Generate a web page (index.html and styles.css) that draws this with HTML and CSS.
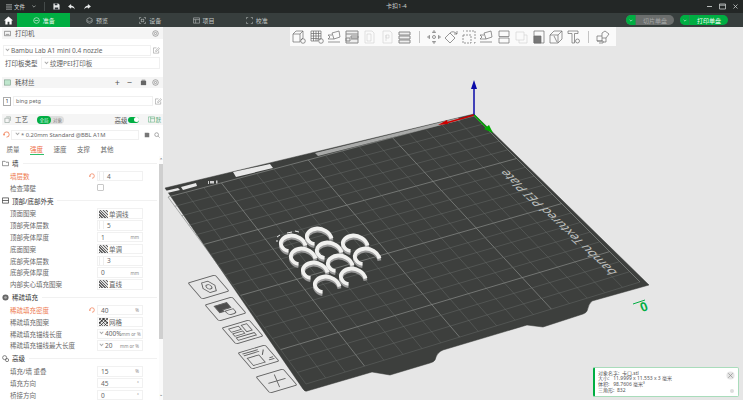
FILE: index.html
```html
<!DOCTYPE html>
<html lang="zh">
<head>
<meta charset="utf-8">
<title>卡扣1-4</title>
<link rel="stylesheet" href="styles.css">
</head>
<body>
<svg class="defs" width="0" height="0">
  <symbol id="reset" viewBox="0 0 8 8"><path d="M1.2 4.8A3 3 0 1 1 4 7" fill="none" stroke="#f0764a" stroke-width=".9"/><path d="M0 3.6h2.4L1.2 5.4z" fill="#f0764a"/></symbol>
  <symbol id="edit" viewBox="0 0 8 8"><path d="M6.5 4v3h-6V1h3.500M3 5l.3-1.300L6.500.8l1 1L4.300 5z" fill="none" stroke="#8a8a8a" stroke-width=".6"/></symbol>
  <symbol id="gear" viewBox="0 0 8 8"><circle cx="4" cy="4" r="3.200" fill="none" stroke="#777" stroke-width=".7"/><circle cx="4" cy="4" r="1.300" fill="none" stroke="#777" stroke-width=".7"/></symbol>
</svg>

<header class="titlebar">
  <div class="title-left">
    <svg class="ti menu" viewBox="0 0 7 6"><path d="M0 .5h7M0 3h7M0 5.500h7" stroke="#d8dcdb" stroke-width=".8"/></svg>
    <span class="file">文件</span>
    <svg class="ti chev" viewBox="0 0 6 4"><path d="M.5.5 3 3 5.500.5" fill="none" stroke="#cfd3d2" stroke-width=".9"/></svg>
    <i class="sep"></i>
    <svg class="ti save" viewBox="0 0 8 8"><path d="M.5.500h5.500l1.500 1.500v5.500h-7z" fill="#e8eaea"/><path d="M2 .500h3v2H2zM2 5h4v2.500H2z" fill="#30363a"/></svg>
    <svg class="ti undo" viewBox="0 0 8 7"><path d="M3.500 0 0 2.800l3.500 2.700V4c2 0 3.500.6 4.500 2.500C7.700 3.800 6 2 3.500 1.800z" fill="#e8eaea"/></svg>
    <svg class="ti redo" viewBox="0 0 8 7"><path d="M4.500 0 8 2.800 4.500 5.500V4C2.500 4 1 4.600 0 6.500.3 3.800 2 2 4.500 1.800z" fill="#e8eaea"/></svg>
  </div>
  <div class="title-name">卡扣1-4</div>
  <div class="win">
    <svg class="wi" viewBox="0 0 7 7"><path d="M1 3.500h5" stroke="#c8cccb" stroke-width=".9"/></svg>
    <svg class="wi" viewBox="0 0 7 7"><path d="M.5 1h6v5h-6zM.5 2.200h6" fill="none" stroke="#c8cccb" stroke-width=".8"/></svg>
    <svg class="wi" viewBox="0 0 7 7"><path d="m1.500 1.500 4 4m0-4-4 4" stroke="#c8cccb" stroke-width=".8"/></svg>
  </div>
</header>

<nav class="tabbar">
  <div class="home"><svg viewBox="0 0 10 10"><path d="M5 .5 10 5H8.500v4.500H6V6.500H4v3H1.500V5H0z" fill="#fff"/></svg></div>
  <div class="tab active"><svg viewBox="0 0 8 8"><circle cx="4" cy="4" r="3.200" fill="none" stroke="#e8f7ee" stroke-width=".7"/><path d="M2 4h4" stroke="#e8f7ee" stroke-width=".7"/></svg><span>准备</span></div>
  <div class="tab"><svg viewBox="0 0 8 8"><path d="M1 2.200 4 .8l3 1.400v3.600L4 7.200 1 5.800z" fill="none" stroke="#b5bab9" stroke-width=".7"/><path d="M1 4l3 1.400L7 4" fill="none" stroke="#b5bab9" stroke-width=".6"/></svg><span>预览</span></div>
  <div class="tab"><svg viewBox="0 0 8 8"><path d="M.5 2.500v-2h2M5.500.5h2v2M7.500 5.500v2h-2M2.500 7.500h-2v-2" fill="none" stroke="#b5bab9" stroke-width=".7"/><rect x="2.500" y="2.500" width="3" height="3" fill="none" stroke="#b5bab9" stroke-width=".7"/></svg><span>设备</span></div>
  <div class="tab"><svg viewBox="0 0 8 8"><path d="M.5 1h7v6h-7zM.5 3h7M3 3v4" fill="none" stroke="#b5bab9" stroke-width=".7"/></svg><span>项目</span></div>
  <div class="tab"><svg viewBox="0 0 8 8"><path d="M.5 2.500v-2h2M5.500.5h2v2M7.500 5.500v2h-2M2.500 7.500h-2v-2" fill="none" stroke="#b5bab9" stroke-width=".7"/></svg><span>校准</span></div>
  <div class="actions">
    <div class="action off"><b class="drop"><svg viewBox="0 0 6 4"><path d="M1 1 3 3l2-2" fill="none" stroke="#fff" stroke-width=".8"/></svg></b><span>切片单盘</span></div>
    <div class="action on"><b class="drop"><svg viewBox="0 0 6 4"><path d="M1 1 3 3l2-2" fill="none" stroke="#fff" stroke-width=".8"/></svg></b><span>打印单盘</span></div>
  </div>
</nav>

<main class="workspace">
  <aside class="side">
    <div class="sect first">
      <svg class="si" viewBox="0 0 8 8"><path d="M.5 1.500h7v5h-7zM2 5h4" fill="none" stroke="#777" stroke-width=".8"/></svg>
      <span class="sect-name">打印机</span>
      <svg class="si end"><use href="#gear"/></svg>
    </div>
    <div class="line printer">
      <div class="select wide"><i class="caret"></i>Bambu Lab A1 mini 0.4 nozzle</div>
      <svg class="si"><use href="#edit"/></svg>
    </div>
    <div class="line plate">
      <span class="plate-label">打印板类型</span>
      <div class="select plate-select"><i class="caret"></i>纹理PEI打印板</div>
    </div>
    <div class="sect filament">
      <svg class="si" viewBox="0 0 8 8"><rect x=".5" y="1" width="7" height="6" fill="#bfe6cd" stroke="#7b9c88" stroke-width=".7"/></svg>
      <span class="sect-name">耗材丝</span>
      <span class="sym plus">+</span>
      <span class="sym">−</span>
      <svg class="si box" viewBox="0 0 8 8"><path d="M1 2h6v5H1z" fill="#666"/><path d="M2 .8h4V2H2z" fill="#888"/></svg>
      <svg class="si"><use href="#gear"/></svg>
    </div>
    <div class="line spool">
      <span class="slot">1</span>
      <div class="select spool-name">bing petg</div>
      <svg class="si"><use href="#edit"/></svg>
    </div>
    <div class="sect process">
      <svg class="si" viewBox="0 0 8 8"><path d="M2.500 1h5v4.500M1 2.500h5v5H1z" fill="none" stroke="#8a9a92" stroke-width=".7"/></svg>
      <span class="sect-name">工艺</span>
      <div class="seg"><span class="seg-on">全局</span><span class="seg-off">对象</span></div>
      <span class="adv">高级</span>
      <i class="switch"></i>
      <svg class="si view" viewBox="0 0 8 8"><path d="M.5 1h7v6h-7zM3 1v6M3 3h4.500" fill="none" stroke="#54a877" stroke-width=".6"/></svg>
      <span class="mode">默</span>
    </div>
    <div class="line preset">
      <svg class="si"><use href="#reset"/></svg>
      <div class="select preset-name"><i class="caret"></i>* 0.20mm Standard @BBL A1M</div>
      <svg class="ps" viewBox="0 0 8 8"><path d="M1 1h5l1 1v5H1z" fill="#777"/></svg>
      <svg class="ps" viewBox="0 0 8 8"><circle cx="3.500" cy="3.500" r="2.500" fill="none" stroke="#777" stroke-width=".8"/><path d="m5.500 5.500 2 2" stroke="#777" stroke-width=".8"/></svg>
    </div>
    <div class="subtabs">
      <span>质量</span><span class="cur">强度</span><span>速度</span><span>支撑</span><span>其他</span>
    </div>

    <div class="params">
      <div class="list">
        <div class="group"><svg class="gi" viewBox="0 0 8 8"><path d="M.5 1.500h3l1 1h3v4h-7z" fill="none" stroke="#555" stroke-width=".7"/></svg><b>墙</b><i></i></div>
        <div class="row mod"><span class="lab">墙层数</span><svg class="rs"><use href="#reset"/></svg><div class="field"><span class="spin"></span>4</div></div>
        <div class="row"><span class="lab">检查薄壁</span><div class="check-wrap"><i class="check"></i></div></div>

        <div class="group"><svg class="gi" viewBox="0 0 8 8"><path d="M.5 1h7v6h-7zM.5 4h7" fill="none" stroke="#333" stroke-width=".8"/></svg><b>顶部/底部外壳</b><i></i></div>
        <div class="row"><span class="lab">顶面图案</span><div class="field pat"><i class="hatch"></i>单调线</div></div>
        <div class="row"><span class="lab">顶部壳体层数</span><div class="field"><span class="spin"></span>5</div></div>
        <div class="row"><span class="lab">顶部壳体厚度</span><div class="field"><span class="nospin"></span>1<em>mm</em></div></div>
        <div class="row"><span class="lab">底面图案</span><div class="field pat"><i class="hatch"></i>单调</div></div>
        <div class="row"><span class="lab">底部壳体层数</span><div class="field"><span class="spin"></span>3</div></div>
        <div class="row"><span class="lab">底部壳体厚度</span><div class="field"><span class="nospin"></span>0<em>mm</em></div></div>
        <div class="row"><span class="lab">内部实心填充图案</span><div class="field pat"><i class="hatch"></i>直线</div></div>

        <div class="group"><svg class="gi" viewBox="0 0 8 8"><circle cx="4" cy="4" r="3.500" fill="#666"/><circle cx="4" cy="4" r="1.500" fill="#aaa"/></svg><b>稀疏填充</b><i></i></div>
        <div class="row mod"><span class="lab">稀疏填充密度</span><svg class="rs"><use href="#reset"/></svg><div class="field"><span class="nospin"></span>40<em>%</em></div></div>
        <div class="row"><span class="lab">稀疏填充图案</span><div class="field pat"><i class="hatch mesh"></i>网格</div></div>
        <div class="row"><span class="lab">稀疏填充锚线长度</span><div class="field"><i class="caret"></i>400%<em class="tight">mm or %</em></div></div>
        <div class="row"><span class="lab">稀疏填充锚线最大长度</span><div class="field"><i class="caret"></i>20<em>mm or %</em></div></div>

        <div class="group"><svg class="gi" viewBox="0 0 8 8"><circle cx="3" cy="3" r="2.300" fill="none" stroke="#555" stroke-width=".8"/><circle cx="5.800" cy="5.800" r="1.800" fill="none" stroke="#555" stroke-width=".8"/></svg><b>高级</b><i></i></div>
        <div class="row"><span class="lab">填充/墙 重叠</span><div class="field"><span class="nospin"></span>15<em>%</em></div></div>
        <div class="row"><span class="lab">填充方向</span><div class="field"><span class="nospin"></span>45<em>°</em></div></div>
        <div class="row"><span class="lab">桥接方向</span><div class="field"><span class="nospin"></span>0<em>°</em></div></div>
      </div>
      <div class="scroll"><span class="arrow">⌃</span><div class="thumb"></div><span class="arrow low">⌄</span></div>
    </div>
  </aside>

  <section class="stage">
    <svg class="scene" viewBox="163 27 580 373" width="580" height="373">
      <defs>
        <g id="ring">
          <path d="M12.500 3.500C11-3.500 3-6.800-2-6.500-9-6-14-1-11.500 4-10 7-7.500 8.500-4.500 9" fill="none" stroke="#9a9a9a" stroke-width="3.800" transform="translate(0 2.200)"/>
          <path d="M12.500 3.500C11-3.500 3-6.800-2-6.500-9-6-14-1-11.500 4-10 7-7.500 8.500-4.500 9" fill="none" stroke="#f0f0ee" stroke-width="3.800"/>
        </g>
      </defs>
      <path class="plate-body" d="M165 188 474 114 649 285 592 301Q589 303 587 311 586 313 583 314L543 327 527 325 443 350Q437 352 435 360 434 362 430 363L390 375 372 372 307 391Q305 392 303 389Z"/>
      <g id="grid"></g>
      <path class="strip" d="M165 191 178 188 180 190 167 193Z"/>
      <path class="strip" d="M181 187 196 183 197 186 183 190Z"/>
      <path class="strip" d="M233 172 270 164 273 168 236 177Z"/>
      <path class="strip faint" d="M315 153 458 118 461 120 318 156Z"/>
      <path class="mark" d="M210 181h4v2.500h-4zM216 180.500h1.500v3h-1.500zM208 181h1v3h-1z"/>
      <text class="plate-text" transform="matrix(-.73 -.68 .97 -.26 618 273)" textLength="152" lengthAdjust="spacingAndGlyphs">bambu Textured PEI Plate</text>

      <g class="rings">
        <use href="#ring" x="293" y="242"/><use href="#ring" x="319" y="235"/><use href="#ring" x="355" y="242"/>
        <use href="#ring" x="329" y="249"/><use href="#ring" x="303" y="255"/><use href="#ring" x="367" y="255"/>
        <use href="#ring" x="340" y="262"/><use href="#ring" x="315" y="269"/><use href="#ring" x="353" y="275"/>
        <use href="#ring" x="327" y="283"/>
      </g>
      <path class="select-marks" d="M277 237l3-2M277 240v2M287 233l5-1M295 231l4 1"/>

      <path class="axis-b" d="M474 115V87"/><path fill="#0a0aa8" d="M474 80 477 89H471Z"/>
      <path class="axis-r" d="M474 115 446 123"/><path fill="#c00" d="M438 125 447 120 448 124Z"/>
      <path class="axis-g" d="M474 115 488 129"/><path fill="#0a0" d="M493 133 484 129 489 125Z"/>

      <path class="zero-line" d="M633 304 645 300"/>
      <text class="zero" transform="matrix(.95 -.28 .35 .95 642 312)">0</text>

      <g class="pad" transform="matrix(.9 -.267 .7 .8 188 283)">
        <rect width="30" height="20" rx="1.500"/>
        <path d="M9 10 12 4H19L22 10 19 16H12Z"/><circle cx="15.500" cy="10" r="2.500"/>
      </g>
      <g class="pad" transform="matrix(.9 -.267 .7 .8 205 305)">
        <rect width="30" height="20" rx="1.500"/>
        <path class="fillp" d="M7 4H21V10H12V12H7Z"/><path d="M13 12H22V15Q22 17 19 17H16Q13 17 13 14Z"/>
      </g>
      <g class="pad" transform="matrix(.9 -.267 .7 .8 222 328)">
        <rect width="30" height="20" rx="1.500"/>
        <path d="M5 3H16V7H5ZM5 9H16V12H5ZM19 3H25V11H19ZM5 14H25V17H5Z"/>
      </g>
      <g class="pad" transform="matrix(.9 -.267 .7 .8 238 353)">
        <rect width="30" height="20" rx="1.500"/>
        <path d="M3 2.500H20M3 4.500H20M4 8H17V17H4ZM20 9 25 4M24 14H28M22 16H28"/>
      </g>
      <g class="pad" transform="matrix(.9 -.267 .7 .8 256 377)">
        <rect width="30" height="20" rx="1.500"/>
        <path d="M6 10H25M18 3 13 17"/>
      </g>
    </svg>

    <div class="toolbar">
      <svg class="tool" viewBox="0 0 14 14"><path d="M1 4 4 1H11V8L9 10M1 4H8V12H1ZM8 4 11 1"/><circle cx="11" cy="11" r="2.300"/></svg>
      <svg class="tool" viewBox="0 0 14 14"><path d="M1 1H11V9H8V11H1ZM1 3.500H11M1 6H11M1 8.500H8M3.500 1V11M6 1V11M8.500 1V9"/><circle cx="11" cy="11" r="2.300"/></svg>
      <svg class="tool" viewBox="0 0 14 14"><path d="M5 3 12 1 13 7 7 9ZM5 5H1L3 7 1 9H7M1 12H13" /></svg>
      <svg class="tool solid" viewBox="0 0 14 14"><path d="M1 1H13V13H1ZM1 4H13M1 8H5V11H1ZM6 6H13V8H6ZM6 9H13" /></svg>
      <svg class="tool dim" viewBox="0 0 14 14"><path d="M3 1H10L12 3V13H3ZM5 4H9V11H5Z"/></svg>
      <svg class="tool dim" viewBox="0 0 14 14"><path d="M3 1H10L12 3V13H3ZM6 5H9V8H6ZM6 5V11"/></svg>
      <svg class="tool solid" viewBox="0 0 14 14"><path d="M2 2H13V5H2ZM2 6H13V9H2ZM2 10H13V13H2Z"/></svg>
      <i class="tsep"></i>
      <svg class="tool" viewBox="0 0 14 14"><path d="M7 .5 8.500 2.500H5.500ZM7 13.500 8.500 11.500H5.500ZM.5 7 2.500 5.500V8.500ZM13.500 7 11.500 5.500V8.500Z"/><circle cx="7" cy="7" r="1.500"/></svg>
      <svg class="tool" viewBox="0 0 14 14"><path d="M1 8 6 3 11 8 6 13ZM6 3Q9 0 13 4M13 1V4H10"/></svg>
      <svg class="tool" viewBox="0 0 14 14"><path d="M1 5H9V13H1ZM4 1H13V9M1 1H2M13 12V13H11" stroke-dasharray="2 1"/></svg>
      <svg class="tool" viewBox="0 0 14 14"><path d="M5 3 12 1 13 7 7 9ZM5 5H1L3 7 1 9H7M1 12H13"/></svg>
      <svg class="tool" viewBox="0 0 14 14"><path d="M2 1H12V6.500H2ZM2 8H12V13H2Z"/></svg>
      <svg class="tool dim" viewBox="0 0 14 14"><path d="M2 2H10V10H2ZM5 10V13H13V5H10"/></svg>
      <svg class="tool" viewBox="0 0 14 14"><path d="M2 1H12V13H2Z"/><path class="fillp" d="M2 6H9V13H2Z"/></svg>
      <svg class="tool" viewBox="0 0 14 14"><path d="M1 5H9V13H1ZM1 5 5 1H13V9L9 13M9 5 13 1M5 6 8 12"/></svg>
      <svg class="tool" viewBox="0 0 14 14"><path d="M1 1H11V3.500H7.500V13H5V3.500H1Z"/><circle cx="10.500" cy="11" r="2"/></svg>
      <i class="tsep"></i>
      <svg class="tool" viewBox="0 0 14 14"><path d="M1 6H6V11H1ZM1 11H7V13H3M6 6V3L9 1 13 4 10 8H6M10 8V12H7"/></svg>
    </div>

    <div class="info">
      <p>对象名字:&nbsp; 卡口.stl</p>
      <p>大小:&nbsp;&nbsp; 11.9999 x 11.553 x 3 毫米</p>
      <p>体积:&nbsp;&nbsp; 98.7606 毫米³</p>
      <p>三角形:&nbsp; 832</p>
      <svg class="info-x" viewBox="0 0 10 10"><circle cx="5" cy="5" r="4.500" fill="#e4e4e4"/><path d="m2.500 2.500 5 5m0-5-5 5" stroke="#888" stroke-width=".7"/></svg>
      <i class="info-dot"></i>
    </div>
  </section>
</main>
<script src="script.js"></script>
</body>
</html>
```

FILE: styles.css
```css
* { box-sizing: border-box; margin: 0; padding: 0; }
html, body { width: 743px; height: 400px; overflow: hidden; }
body { font-family: "Noto Sans", "Noto Sans CJK SC", sans-serif; font-size: 7px; color: #555; background: #e6e6e6; display: flex; flex-direction: column; }
.defs { position: absolute; }
svg { display: block; flex: none; }

.titlebar { height: 13px; background: #232726; display: flex; align-items: center; position: relative; flex: none; }
.title-left { display: flex; align-items: center; padding-left: 6px; }
.ti { height: 6px; }
.menu { width: 6px; }
.file { color: #d8dcdb; font-size: 5.500px; margin-left: 2px; width: 9px; white-space: nowrap; }
.chev { width: 4px; height: 3px; margin-left: 9px; }
.sep { width: 1px; height: 9px; background: #444a49; margin-left: 8px; }
.save { width: 7px; height: 7px; margin-left: 8px; }
.undo { width: 7px; margin-left: 8px; }
.redo { width: 7px; margin-left: 9px; }
.title-name { position: absolute; left: 386px; top: 3px; color: #c9cdcc; font-size: 6px; line-height: 7px; }
.win { margin-left: auto; display: flex; gap: 6px; padding-right: 4px; }
.wi { width: 7px; height: 7px; }

.tabbar { height: 14px; background: #373e3d; display: flex; align-items: stretch; flex: none; }
.home { width: 17px; display: flex; align-items: center; justify-content: center; }
.home svg { width: 9px; height: 9px; }
.tab { width: 53.300px; display: flex; align-items: center; justify-content: center; gap: 3px; color: #c2c6c5; font-size: 6px; }
.tab svg { width: 7px; height: 7px; }
.tab.active { background: #00ae42; color: #eaf8ef; }
.actions { margin-left: auto; display: flex; gap: 6px; padding: 2px 15px 2px 0; }
.action { width: 48px; border-radius: 5px; display: flex; align-items: center; overflow: hidden; font-size: 6px; }
.action span { flex: 1; text-align: center; }
.drop { width: 10px; align-self: stretch; background: #00ae42; display: flex; align-items: center; justify-content: center; border-right: 1px solid #2b8c52; }
.drop svg { width: 4px; height: 3px; }
.off { background: #6b6e6d; color: #a5a8a7; }
.on { background: #00ae42; color: #f2fff7; }

.workspace { flex: 1; display: flex; min-height: 0; }
.side { width: 163px; background: #fff; flex: none; display: flex; flex-direction: column; overflow: hidden; }

.sect { height: 11px; margin-left: 2px; background: #f5f5f5; display: flex; align-items: center; padding-left: 2px; flex: none; color: #555; }
.si { width: 7px; height: 7px; }
.sect-name { margin-left: 4px; font-size: 6.500px; line-height: 11px; }
.sect .end { margin-left: auto; margin-right: 4px; }
.sect.first { margin-top: 1px; }

.line { display: flex; align-items: center; flex: none; }
.select { border: 1px solid #f0f0f0; display: flex; align-items: center; font-size: 6.500px; color: #666; white-space: nowrap; overflow: hidden; }
.caret { width: 3px; height: 3px; border-right: .6px solid #aaa; border-bottom: .6px solid #aaa; transform: rotate(45deg) translate(-1px, -1px); margin: 0 2.500px 0 1.500px; flex: none; }
.printer { margin: 6px 0 0 3px; height: 11px; gap: 2px; }
.wide { width: 148px; height: 11px; }
.plate { margin: 1px 0 0 5px; height: 12px; }
.plate-label { width: 36px; color: #555; font-size: 6.500px; }
.plate-select { width: 119px; height: 12px; padding-left: 1px; }
.filament { margin-top: 8px; }
.sym { font-size: 9px; line-height: 11px; color: #555; }
.plus { margin-left: auto; margin-right: 7px; }
.box { margin-left: 8px; margin-right: 5px; }
.filament .si:last-child { margin-right: 4px; }
.spool { margin: 8px 0 0 3px; height: 10px; gap: 2px; }
.slot { width: 8px; height: 9px; border: 1px solid #aaa; font-size: 5.500px; line-height: 7px; text-align: center; color: #333; }
.spool-name { width: 140px; height: 10px; padding-left: 2px; font-size: 5.500px; }
.process { margin-top: 8px; }
.seg { margin-left: 9px; width: 27px; height: 8px; background: #dedede; border-radius: 4px; display: flex; font-size: 4.500px; line-height: 8px; color: #8a8a8a; }
.seg-on { width: 14px; background: #00ae42; color: #dff5e7; border-radius: 4px; text-align: center; }
.seg-off { text-align: center; flex: 1; }
.adv { margin-left: auto; font-size: 6.500px; }
.switch { width: 11px; height: 6px; border-radius: 3px; background: #00ae42; margin-left: 1px; position: relative; }
.switch::after { content: ""; position: absolute; right: .5px; top: .5px; width: 5px; height: 5px; background: #fff; border-radius: 50%; }
.view { margin-left: 9px; }
.mode { color: #54a877; font-size: 5.500px; margin-right: 2px; margin-left: 0; }
.preset { margin: 5px 0 0 3px; height: 9px; }
.preset-name { width: 128px; height: 10px; margin-left: 1px; padding-left: 2px; font-size: 5.800px; }
.ps { width: 6px; height: 6px; margin-left: 4.500px; }
.subtabs { margin: 6px 0 0 6px; height: 11px; display: flex; gap: 9.500px; font-size: 6.500px; line-height: 9px; flex: none; color: #6a6a6a; }
.subtabs span { width: 14px; text-align: center; height: 10px; }
.subtabs .cur { color: #ee6a3c; border-bottom: 1.500px solid #2fbf6a; }

.params { display: flex; flex: 1; min-height: 0; }
.list { width: 159px; flex: none; }
.group { height: 14px; display: flex; align-items: center; padding-left: 2px; }
.gi { width: 7px; height: 7px; margin-right: 3px; }
.group b { font-weight: 400; color: #333; font-size: 6.500px; white-space: nowrap; }
.group i { flex: 1; border-top: 1px solid #f1f1f1; margin: 0 2px 0 4px; }
.row { height: 11.800px; display: flex; align-items: center; padding-left: 10px; position: relative; }
.lab { font-size: 6.500px; color: #6a6a6a; white-space: nowrap; }
.mod .lab { color: #ee7a50; }
.rs { width: 6px; height: 6px; position: absolute; left: 89px; top: 3px; }
.field { position: absolute; left: 97px; top: .8px; width: 46px; height: 10.500px; border: 1px solid #f1f1f1; display: flex; align-items: center; font-size: 6.500px; color: #666; }
.spin { width: 5px; height: 8px; margin: 0 3px 0 1px; border-left: 1px solid #eee; border-right: 1px solid #eee; flex: none; }
.nospin { width: 3px; flex: none; }
.field em { margin-left: auto; margin-right: 3px; font-style: normal; font-size: 4.500px; color: #888; white-space: nowrap; }
.field em.tight { margin-left: 0; margin-right: 0; }
.pat { padding-left: 1px; }
.hatch { width: 9px; height: 8px; margin-right: 1px; flex: none; background: repeating-linear-gradient(45deg, #666 0 1px, #ddd 1px 2px); }
.mesh { background: repeating-linear-gradient(45deg, #777 0 1px, #e2e2e2 1px 2.500px), repeating-linear-gradient(-45deg, #777 0 1px, transparent 1px 2.500px); background-blend-mode: multiply; }
.check-wrap { position: absolute; left: 97px; top: 2.500px; }
.check { display: block; width: 7px; height: 7px; border: 1px solid #c8c8c8; border-radius: 1px; }

.scroll { width: 4px; flex: none; background: #fbfbfb; display: flex; flex-direction: column; align-items: center; }
.arrow { height: 8px; font-size: 5px; line-height: 8px; color: #555; flex: none; }
.thumb { height: 175px; width: 5px; background: #cfcfcf; flex: none; }
.low { margin-top: auto; line-height: 5px; }

.stage { flex: 1; position: relative; display: flex; justify-content: center; align-items: flex-start; min-width: 0; }
.scene { position: absolute; left: 0; top: 0; }
.toolbar { position: relative; height: 19px; width: 326px; margin-top: 0; background: #fafafa; display: flex; align-items: center; padding-left: 2px; }
.tool { width: 14px; height: 14px; margin-right: 3.500px; fill: none; stroke: #6a6a6a; stroke-width: .7; flex: none; }
.tool.solid { stroke-width: 1; stroke: #888; fill: #eee; }
.tool.dim { stroke: #d4d4d4; }
.tool .fillp { fill: #777; }
.tsep { width: 1px; height: 12px; background: #c4c4c4; margin: 0 7px 0 4px; flex: none; }

.plate-body { fill: #3d3f3d; stroke: #343635; stroke-width: .5; }
.g-min { stroke: #676a68; stroke-width: .5; }
.g-maj { stroke: #8a8c8a; stroke-width: .7; }
.strip { fill: #e8e8e8; }
.strip.faint { fill: #a9aaa9; }
.mark { fill: #cfcfcf; }
.plate-text { fill: #bfc0bf; font-size: 13px; font-family: "Noto Sans", sans-serif; }
.select-marks { fill: none; stroke: #fff; stroke-width: .9; }
.axis-b { stroke: #0a0aa8; stroke-width: 1.500; }
.axis-r { stroke: #c00; stroke-width: 1.500; }
.axis-g { stroke: #0a0; stroke-width: 1.500; }
.zero-line { stroke: #00ae42; stroke-width: 1; }
.zero { fill: #00ae42; font-size: 13px; font-family: "Liberation Sans", sans-serif; font-weight: 700; }
.pad { fill: none; stroke: #606060; stroke-width: .9; }
.pad .fillp { fill: #4d4d4d; }

.info { position: absolute; left: 430px; top: 340px; width: 146px; height: 30px; background: #fff; border: 1px solid #a9dcbb; border-left: 2.500px solid #00ae42; border-radius: 2px; padding: 2.500px 0 0 3px; font-size: 5px; line-height: 5.700px; color: #555; }
.info p { white-space: nowrap; }
.info-x { position: absolute; right: 3px; top: 3px; width: 9px; height: 9px; }
.info-dot { position: absolute; right: 4px; bottom: 3px; width: 4px; height: 4px; border-radius: 50%; background: #ddd; }
```

FILE: script.js
```js
// Perspective grid of the build plate, 18 x 18 cells, drawn from the plate's four inner corners.
(function () {
  var svgNS = "http://www.w3.org/2000/svg";
  var p = [[474, 116], [168, 197], [306, 384], [640, 282]];
  var dx1 = p[1][0] - p[2][0], dx2 = p[3][0] - p[2][0], sx = p[0][0] - p[1][0] + p[2][0] - p[3][0];
  var dy1 = p[1][1] - p[2][1], dy2 = p[3][1] - p[2][1], sy = p[0][1] - p[1][1] + p[2][1] - p[3][1];
  var den = dx1 * dy2 - dx2 * dy1;
  var g = (sx * dy2 - dx2 * sy) / den, h = (dx1 * sy - sx * dy1) / den;
  var a = p[1][0] - p[0][0] + g * p[1][0], b = p[3][0] - p[0][0] + h * p[3][0], c = p[0][0];
  var d = p[1][1] - p[0][1] + g * p[1][1], e = p[3][1] - p[0][1] + h * p[3][1], f = p[0][1];
  function map(u, v) {
    var w = g * u + h * v + 1;
    return [(a * u + b * v + c) / w, (d * u + e * v + f) / w];
  }
  var host = document.getElementById("grid");
  function line(s, t, cls) {
    var l = document.createElementNS(svgNS, "line");
    l.setAttribute("x1", s[0].toFixed(1)); l.setAttribute("y1", s[1].toFixed(1));
    l.setAttribute("x2", t[0].toFixed(1)); l.setAttribute("y2", t[1].toFixed(1));
    l.setAttribute("class", cls);
    host.appendChild(l);
  }
  for (var i = 0; i <= 18; i++) {
    var cls = i % 5 === 0 ? "g-maj" : "g-min";
    line(map(i / 18, 0), map(i / 18, 1), cls);
    line(map(0, i / 18), map(1, i / 18), cls);
  }
})();
```
